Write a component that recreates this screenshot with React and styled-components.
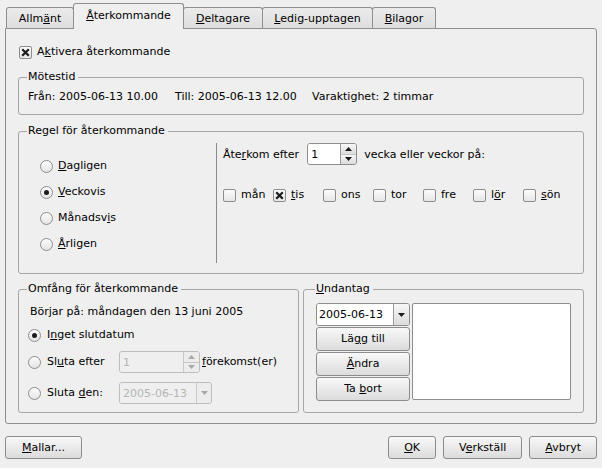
import React from "react";
import styled, { createGlobalStyle } from "styled-components";

const Global = createGlobalStyle`
  html, body { margin: 0; padding: 0; background: #efefef; }
  body {
    font-family: "DejaVu Sans", "Liberation Sans", sans-serif;
    font-size: 11px;
    color: #000;
  }
`;

const Window = styled.div`
  width: 602px;
  height: 468px;
  box-sizing: border-box;
  padding: 3px 5px 0 5px;
  display: flex;
  flex-direction: column;
  background: #efefef;
`;

const TabBar = styled.div`
  display: flex;
  align-items: flex-end;
  height: 25px;
  padding-left: 2px;
`;

const Tab = styled.div`
  box-sizing: border-box;
  width: ${(p) => p.$w}px;
  height: ${(p) => (p.$active ? 26 : 21)}px;
  margin-left: -1px;
  margin-bottom: ${(p) => (p.$active ? -1 : 0)}px;
  padding-bottom: ${(p) => (p.$active ? 3 : 0)}px;
  display: flex;
  align-items: center;
  justify-content: center;
  border: 1px solid #8f8f8f;
  border-bottom: none;
  border-radius: 3px 3px 0 0;
  background: ${(p) => (p.$active ? "#efefef" : "linear-gradient(#ebebeb, #dedede)")};
  position: relative;
  z-index: ${(p) => (p.$active ? 1 : 0)};
  white-space: nowrap;
`;

const Panel = styled.div`
  box-sizing: border-box;
  height: 396px;
  border: 1px solid #8f8f8f;
  border-radius: 0 3px 3px 3px;
  padding: 16px 12px 10px 12px;
  display: flex;
  flex-direction: column;
`;

const Mn = styled.u`
  text-decoration: underline;
`;

const Group = styled.fieldset`
  margin: ${(p) => p.$top ?? 0}px 0 0 0;
  padding: 0 ${(p) => p.$px ?? 9}px 0 ${(p) => p.$px ?? 9}px;
  border: 1px solid #a6a6a6;
  border-radius: 3px;
  min-width: 0;
  box-sizing: border-box;
  height: ${(p) => p.$h}px;
  width: ${(p) => (p.$w ? `${p.$w}px` : "auto")};
  flex: ${(p) => (p.$grow ? "1 1 0" : "none")};
  display: flex;
  flex-direction: column;
`;

const Legend = styled.legend`
  padding: 0 3px 0 1px;
  margin-left: ${(p) => p.$indent}px;
  line-height: 14px;
  height: 14px;
`;

const Option = styled.label`
  display: flex;
  align-items: center;
  gap: ${(p) => p.$gap ?? 5}px;
  height: 14px;
  line-height: 14px;
  white-space: nowrap;
  flex: none;
`;

const CheckBox = styled.span`
  width: 13px;
  height: 13px;
  box-sizing: border-box;
  border: 1px solid #8d8d8d;
  border-radius: 2px;
  background: linear-gradient(#fcfcfc, #e6e6e6);
  display: inline-flex;
  align-items: center;
  justify-content: center;
  flex: none;
`;

const RadioCircle = styled.span`
  width: 13px;
  height: 13px;
  box-sizing: border-box;
  border: 1px solid #8d8d8d;
  border-radius: 50%;
  background: linear-gradient(#fcfcfc, #e4e4e4);
  display: inline-flex;
  align-items: center;
  justify-content: center;
  flex: none;
`;

const RadioDot = styled.span`
  width: 5px;
  height: 5px;
  border-radius: 50%;
  background: #1c1c1c;
`;

const Check = ({ checked }) => (
  <CheckBox>
    {checked && (
      <svg width="9" height="9" viewBox="0 0 9 9">
        <path d="M1.2 1.2L7.8 7.8M7.8 1.2L1.2 7.8" stroke="#1e1e1e" strokeWidth="2.3" />
      </svg>
    )}
  </CheckBox>
);

const Radio = ({ checked }) => <RadioCircle>{checked && <RadioDot />}</RadioCircle>;

const Arrow = ({ up, color = "#1a1a1a" }) => (
  <svg width="7" height="4" viewBox="0 0 7 4">
    <path d={up ? "M0 4L3.5 0L7 4Z" : "M0 0L7 0L3.5 4Z"} fill={color} />
  </svg>
);

/* spin box and combo box */
const Frame = styled.div`
  display: flex;
  width: ${(p) => p.$w}px;
  height: ${(p) => p.$h ?? 22}px;
  box-sizing: border-box;
  border: 1px solid ${(p) => (p.$disabled ? "#bdbdbd" : "#8d8d8d")};
  border-radius: 3px;
  overflow: hidden;
  flex: none;
`;

const Field = styled.span`
  flex: 1;
  box-sizing: border-box;
  padding-left: 2px;
  display: flex;
  align-items: center;
  background: ${(p) => (p.$disabled ? "#efefef" : "#fff")};
  color: ${(p) => (p.$disabled ? "#b5b5b5" : "#000")};
  border-top: 1px solid ${(p) => (p.$focus ? "#9db7d8" : "transparent")};
  border-left: 1px solid ${(p) => (p.$focus ? "#9db7d8" : "transparent")};
  margin: ${(p) => (p.$focus ? "-1px 0 0 -1px" : "0")};
`;

const SpinButtons = styled.div`
  width: 15px;
  display: flex;
  flex-direction: column;
  border-left: 1px solid ${(p) => (p.$disabled ? "#c8c8c8" : "#9a9a9a")};
`;

const SpinHalf = styled.div`
  flex: 1;
  display: flex;
  align-items: center;
  justify-content: center;
  background: ${(p) => (p.$disabled ? "#ececec" : "linear-gradient(#f7f7f7, #dcdcdc)")};
  & + & {
    border-top: 1px solid ${(p) => (p.$disabled ? "#c8c8c8" : "#a2a2a2")};
  }
`;

const DropButton = styled.div`
  width: ${(p) => p.$w ?? 14}px;
  display: flex;
  align-items: center;
  justify-content: center;
  border-left: 1px solid ${(p) => (p.$disabled ? "#c8c8c8" : "#9a9a9a")};
  background: ${(p) => (p.$disabled ? "#ececec" : "linear-gradient(#f7f7f7, #dcdcdc)")};
`;

const SpinBox = ({ value, width, disabled }) => (
  <Frame $w={width} $disabled={disabled}>
    <Field $disabled={disabled}>{value}</Field>
    <SpinButtons $disabled={disabled}>
      <SpinHalf $disabled={disabled}>
        <Arrow up color={disabled ? "#a8a8a8" : "#1a1a1a"} />
      </SpinHalf>
      <SpinHalf $disabled={disabled}>
        <Arrow color={disabled ? "#a8a8a8" : "#1a1a1a"} />
      </SpinHalf>
    </SpinButtons>
  </Frame>
);

const Combo = ({ value, width, height, disabled, focus, btn }) => (
  <Frame $w={width} $h={height} $disabled={disabled}>
    <Field $disabled={disabled} $focus={focus}>
      {value}
    </Field>
    <DropButton $w={btn} $disabled={disabled}>
      <Arrow color={disabled ? "#a8a8a8" : "#1a1a1a"} />
    </DropButton>
  </Frame>
);

const Button = styled.button`
  font: inherit;
  color: #000;
  box-sizing: border-box;
  height: ${(p) => p.$h ?? 23}px;
  width: ${(p) => (p.$full ? "100%" : "auto")};
  padding: 0 ${(p) => p.$px ?? 15}px;
  border: 1px solid #8c8c8c;
  border-radius: 3px;
  background: linear-gradient(#f8f8f8, #dcdcdc);
  line-height: 14px;
  flex: none;
`;

/* Mötestid */
const TimeRow = styled.div`
  display: grid;
  grid-template-columns: 147px 137px auto;
  margin-top: 6px;
  line-height: 14px;
  white-space: nowrap;
`;

/* Regel */
const RuleBody = styled.div`
  display: flex;
  padding: 5px 0 10px 0;
`;

const FreqCol = styled.div`
  width: 197px;
  box-sizing: border-box;
  padding: 16px 0 0 21px;
  display: flex;
  flex-direction: column;
  gap: 12px;
`;

const VSep = styled.div`
  width: 1px;
  height: 120px;
  background: #8a8a8a;
`;

const RuleCol = styled.div`
  margin-left: 6px;
  display: flex;
  flex-direction: column;
`;

const EveryRow = styled.div`
  display: flex;
  align-items: center;
  height: 22px;
  white-space: nowrap;
`;

const Gap = styled.span`
  display: inline-block;
  width: ${(p) => p.$w}px;
  flex: none;
`;

const DayGrid = styled.div`
  display: grid;
  grid-template-columns: repeat(7, 50px);
  margin-top: 23px;
`;

/* Omfång / Undantag */
const BottomRow = styled.div`
  display: flex;
  gap: 4px;
  margin-top: 8px;
`;

const RangeBody = styled.div`
  display: flex;
  flex-direction: column;
  gap: 9px;
  margin-top: 9px;
`;

const RangeLine = styled.div`
  display: flex;
  align-items: center;
  height: ${(p) => p.$h ?? 14}px;
  white-space: nowrap;
`;

const RangeLabel = styled.div`
  width: 91px;
  flex: none;
`;

const Plain = styled.div`
  line-height: 14px;
  margin-left: 2px;
`;

const ExceptBody = styled.div`
  display: flex;
  gap: 2px;
  margin-top: 7px;
`;

const ExceptCol = styled.div`
  width: 94px;
  display: flex;
  flex-direction: column;
  gap: 1px;
`;

const ListBox = styled.div`
  flex: 1;
  height: 97px;
  box-sizing: border-box;
  background: #fff;
  border: 1px solid #8d8d8d;
  border-radius: 2px;
`;

const ButtonRow = styled.div`
  display: flex;
  align-items: center;
  gap: 7px;
  margin-top: 12px;
`;

const Spacer = styled.div`
  flex: 1;
`;

const tabs = [
  { w: 68, label: <>Allm<Mn>ä</Mn>nt</> },
  { w: 111, label: <><Mn>Å</Mn>terkommande</>, active: true },
  { w: 80, label: <><Mn>D</Mn>eltagare</> },
  { w: 111, label: <><Mn>L</Mn>edig-upptagen</> },
  { w: 64, label: <><Mn>B</Mn>ilagor</> },
];

const freqs = [
  { label: <><Mn>D</Mn>agligen</> },
  { label: <><Mn>V</Mn>eckovis</>, checked: true },
  { label: <>Månadsv<Mn>i</Mn>s</> },
  { label: <><Mn>Å</Mn>rligen</> },
];

const days = [
  { label: <>mån</> },
  { label: <><Mn>t</Mn>is</>, checked: true },
  { label: <>ons</> },
  { label: <>tor</> },
  { label: <>fre</> },
  { label: <>l<Mn>ö</Mn>r</> },
  { label: <><Mn>s</Mn>ön</> },
];

export default function App() {
  return (
    <Window>
      <Global />
      <TabBar>
        {tabs.map((t, i) => (
          <Tab key={i} $w={t.w} $active={t.active}>
            {t.label}
          </Tab>
        ))}
      </TabBar>

      <Panel>
        <Option $gap={5} style={{ marginLeft: 1 }}>
          <Check checked />
          <span>
            A<Mn>k</Mn>tivera återkommande
          </span>
        </Option>

        <Group $top={11} $h={45}>
          <Legend $indent={-1}>Mötestid</Legend>
          <TimeRow>
            <span>Från: 2005-06-13 10.00</span>
            <span>Till: 2005-06-13 12.00</span>
            <span>Varaktighet: 2 timmar</span>
          </TimeRow>
        </Group>

        <Group $top={9} $h={150} $px={0}>
          <Legend $indent={8}>Regel för återkommande</Legend>
          <RuleBody>
            <FreqCol>
              {freqs.map((f, i) => (
                <Option key={i}>
                  <Radio checked={f.checked} />
                  <span>{f.label}</span>
                </Option>
              ))}
            </FreqCol>
            <VSep />
            <RuleCol>
              <EveryRow>
                <span>
                  Åte<Mn>r</Mn>kom efter
                </span>
                <Gap $w={8} />
                <SpinBox value="1" width={50} />
                <Gap $w={7} />
                <span>vecka eller veckor på:</span>
              </EveryRow>
              <DayGrid>
                {days.map((d, i) => (
                  <Option key={i}>
                    <Check checked={d.checked} />
                    <span>{d.label}</span>
                  </Option>
                ))}
              </DayGrid>
            </RuleCol>
          </RuleBody>
        </Group>

        <BottomRow>
          <Group $h={131} $w={281}>
            <Legend $indent={-1}>Omfång för återkommande</Legend>
            <RangeBody>
              <Plain>Börjar på: måndagen den 13 juni 2005</Plain>
              <RangeLine>
                <Option $gap={6}>
                  <Radio checked />
                  <span>
                    I<Mn>n</Mn>get slutdatum
                  </span>
                </Option>
              </RangeLine>
              <RangeLine $h={22}>
                <RangeLabel>
                  <Option $gap={6}>
                    <Radio />
                    <span>
                      Sl<Mn>u</Mn>ta efter
                    </span>
                  </Option>
                </RangeLabel>
                <SpinBox value="1" width={81} disabled />
                <Plain>
                  <Mn>f</Mn>örekomst(er)
                </Plain>
              </RangeLine>
              <RangeLine $h={22}>
                <RangeLabel>
                  <Option $gap={6}>
                    <Radio />
                    <span>
                      Sluta <Mn>d</Mn>en:
                    </span>
                  </Option>
                </RangeLabel>
                <Combo value="2005-06-13" width={93} disabled />
              </RangeLine>
            </RangeBody>
          </Group>

          <Group $h={131} $grow $px={12}>
            <Legend $indent={-1}>
              <Mn>U</Mn>ndantag
            </Legend>
            <ExceptBody>
              <ExceptCol>
                <Combo value="2005-06-13" width={94} height={23} focus btn={15} />
                <Button $h={24} $full>
                  Lä<Mn>g</Mn>g till
                </Button>
                <Button $h={24} $full>
                  <Mn>Ä</Mn>ndra
                </Button>
                <Button $h={24} $full>
                  Ta <Mn>b</Mn>ort
                </Button>
              </ExceptCol>
              <ListBox />
            </ExceptBody>
          </Group>
        </BottomRow>
      </Panel>

      <ButtonRow>
        <Button $px={16}>
          <Mn>M</Mn>allar...
        </Button>
        <Spacer />
        <Button>
          <Mn>O</Mn>K
        </Button>
        <Button>
          V<Mn>e</Mn>rkställ
        </Button>
        <Button>
          <Mn>A</Mn>vbryt
        </Button>
      </ButtonRow>
    </Window>
  );
}
